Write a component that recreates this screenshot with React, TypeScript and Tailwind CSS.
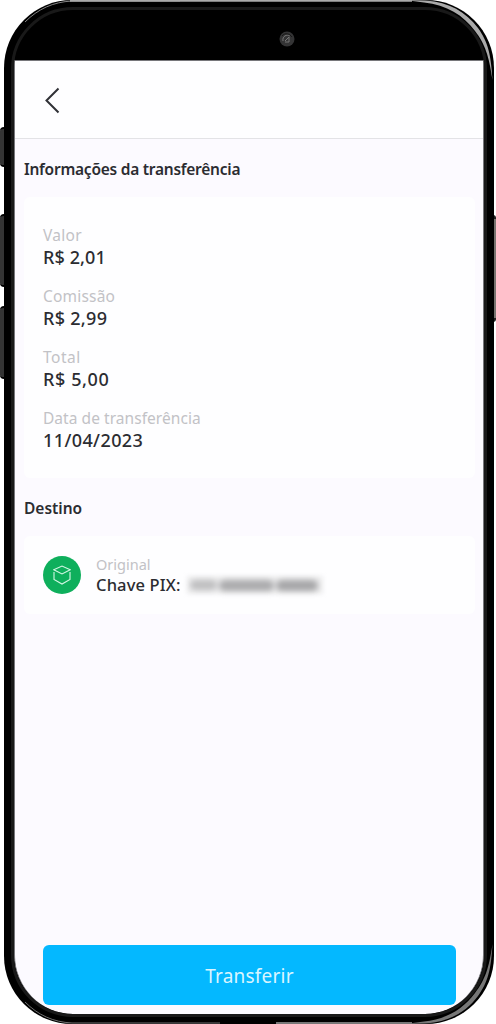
const DETAILS = [
  { label: 'Valor', value: 'R$ 2,01', labelClass: 'tracking-[0.3px]', valueClass: 'tracking-[0.1px]' },
  { label: 'Comissão', value: 'R$ 2,99', labelClass: 'tracking-[0.2px]', valueClass: 'tracking-[0.3px]' },
  { label: 'Total', value: 'R$ 5,00', labelClass: 'tracking-[0.5px]', valueClass: 'tracking-[0.6px]' },
  { label: 'Data de transferência', value: '11/04/2023', labelClass: 'tracking-[0.05px]', valueClass: 'tracking-[0.4px]' },
];

function SideButtons() {
  return (
    <>
      <div className="absolute left-0 top-[127px] h-[40px] w-[5px] rounded-l-sm border-y-2 border-black bg-[#343434]" />
      <div className="absolute left-0 top-[214px] h-[73px] w-[5px] rounded-l-sm border-y-2 border-black bg-[#343434]" />
      <div className="absolute left-0 top-[306px] h-[73px] w-[5px] rounded-l-sm border-y-2 border-black bg-[#343434]" />
      <div className="absolute right-0 top-[215px] h-[107px] w-[3px] rounded-r-sm border-y-4 border-[#222] bg-[#77736f]" />
    </>
  );
}

// Metallic reflections running along the edge of the case
function CaseShine() {
  return (
    <svg className="pointer-events-none absolute inset-0" width="496" height="1024" viewBox="0 0 496 1024" fill="none">
      <path d="M25 22C38 9 53 2 72 1H180" stroke="#858585" strokeWidth="1" />
      <path d="M70 0.8H412" stroke="#aaa" strokeWidth="2" />
      <path d="M405 0L426 0.5C449 2 466 12 478 28C488 42 491 54 492.5 80C489 56 485 44 475 31C463 15 447 5 424 2.5Z" fill="#aaa" />
      <path d="M405 1024L426 1023.5C449 1022 466 1012 478 996C488 982 491 970 492.5 944C489 968 485 980 475 993C463 1009 447 1019 424 1021.5Z" fill="#777" />
      <path d="M25 1002C38 1015 53 1022 72 1023H220" stroke="#707070" strokeWidth="1" />
      <path d="M276 1023H412" stroke="#777" strokeWidth="2" />
    </svg>
  );
}

export default function App() {
  return (
    <div className="relative h-[1024px] w-[496px] overflow-hidden bg-white pl-1 pr-0.5 font-['Noto_Sans',sans-serif] text-[#2b2c31]">
      <SideButtons />
      <div className="relative h-[1024px] w-[490px] rounded-[68px] bg-black px-[7px] pb-[7px] pt-[7px]">
        <div className="h-[1010px] w-[476px] overflow-hidden rounded-[62px] border-[3px] border-[#191919] bg-black">
          <div className="flex h-[50px] items-start justify-center pt-[21px]">
            <svg className="ml-[76px]" width="16" height="16" viewBox="0 0 16 16" fill="none">
              <circle cx="8" cy="8" r="7.5" fill="#343435" />
              <path d="M4 10C3 5 8 3 11 5M6 10L10 6V11H6" stroke="#777" strokeWidth="1" />
              <path d="M3 5C6 1 11 3 13 6" stroke="#171717" />
            </svg>
          </div>

          <div className="flex h-[954px] w-[470px] flex-col overflow-hidden rounded-b-[59px] border-x border-t border-[#77777b] bg-[#fcfaff]">
            <header className="flex h-[78px] shrink-0 items-center border-b border-[#e3e3e6] bg-[#fefeff] pl-[28px]">
              <svg width="18" height="28" viewBox="0 0 18 28" fill="none">
                <path d="M15.5 2.5L3.5 14.5L15.5 26.5" stroke="#303136" strokeWidth="2" />
              </svg>
            </header>

            <main className="flex flex-1 flex-col">
              <h2 className="ml-[9px] mt-[20px] h-[20px] whitespace-nowrap text-[15.5px] font-semibold leading-[20px] tracking-[-0.25px]">
                Informações da transferência
              </h2>
              <section className="ml-[9px] mr-[8px] mt-[18px] h-[281px] rounded-md bg-[#fefeff] pl-[19px] pt-[28px]">
                {DETAILS.map((item) => (
                  <div key={item.label} className="h-[61px]">
                    <p className={`h-[21px] text-[15.5px] leading-[21px] text-[#c2c2c6] ${item.labelClass}`}>{item.label}</p>
                    <p className={`h-[23px] text-[18px] font-medium leading-[22px] ${item.valueClass}`}>{item.value}</p>
                  </div>
                ))}
              </section>

              <h2 className="ml-[9px] mt-[20px] h-[20px] text-[15.5px] font-semibold leading-[20px]">Destino</h2>
              <section className="ml-[9px] mr-[8px] mt-[18px] flex h-[78px] items-center rounded-md bg-[#fefeff] pl-[19px]">
                <div className="flex size-[38px] items-center justify-center rounded-full bg-[#0eaf5c]">
                  <svg width="18" height="20" viewBox="0 0 18 20" fill="none" stroke="#d4f7e4" strokeWidth="1.1">
                    <path d="M0.8 4.8L9 1L17.2 4.8L9 9L0.8 4.8Z" />
                    <path d="M1 7V14.5L9 19L17 14.5V7" />
                  </svg>
                </div>
                <div className="ml-[15px]">
                  <p className="h-[20px] text-[14.5px] leading-[18px] text-[#c2c2c6]">Original</p>
                  <div className="flex h-[21px] items-center">
                    <p className="h-[21px] w-[85px] whitespace-nowrap text-[16.5px] font-medium leading-[19px] tracking-[0.15px]">Chave PIX:</p>
                    <div className="ml-[6px] flex h-[18px] w-[136px] shrink-0 items-center gap-[2px] bg-[#eeeeef] px-[3px] blur-[2px]">
                      <span className="h-[10px] w-[27px] rounded-full bg-[#bdbdbf] blur-[2px]" />
                      <span className="h-[11px] w-[55px] rounded-full bg-[#aaaaac] blur-[2px]" />
                      <span className="h-[11px] w-[42px] rounded-full bg-[#a5a5a7] blur-[2px]" />
                    </div>
                  </div>
                </div>
              </section>

              <button className="mb-[9px] ml-[28px] mt-auto h-[60px] w-[413px] rounded-md bg-[#04b8ff] pt-[2px] text-[19px] tracking-[0.2px] text-[#d9f5ff]">
                Transferir
              </button>
            </main>
          </div>
        </div>
        <div className="absolute bottom-0 left-[217px] h-[3px] w-[56px] rounded-t bg-black" />
      </div>
      <CaseShine />
    </div>
  );
}
